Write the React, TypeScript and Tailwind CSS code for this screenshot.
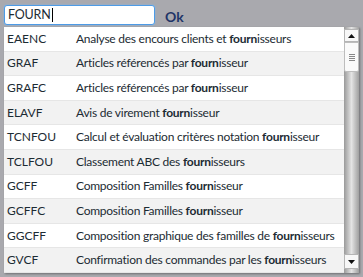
import React from "react";

const rows: [string, string, string, string][] = [
  ["EAENC", "Analyse des encours clients et ", "fourn", "isseurs"],
  ["GRAF", "Articles référencés par ", "fourn", "isseur"],
  ["GRAFC", "Articles référencés par ", "fourn", "isseur"],
  ["ELAVF", "Avis de virement ", "fourn", "isseur"],
  ["TCNFOU", "Calcul et évaluation critères notation ", "fourn", "isseur"],
  ["TCLFOU", "Classement ABC des ", "fourn", "isseurs"],
  ["GCFF", "Composition Familles ", "fourn", "isseur"],
  ["GCFFC", "Composition Familles ", "fourn", "isseur"],
  ["GGCFF", "Composition graphique des familles de ", "fourn", "isseurs"],
  ["GVCF", "Confirmation des commandes par les ", "fourn", "isseurs"],
];

export default function App() {
  return (
    <div
      className="h-[277px] w-[363px] overflow-hidden bg-[#a9a9ae] text-[#1c2b33]"
      style={{ fontFamily: "Lato, 'Open Sans', sans-serif" }}
    >
      <div className="flex h-[27px] items-start pl-[4px] pt-[5px]">
        <div className="flex h-[20px] w-[151px] items-center rounded-[3px] border border-[#4d9be6] bg-white pl-[3px] text-[12.5px] tracking-[-0.2px] shadow-[0_0_2px_#7db7f0]">
          FOURN<span className="ml-[1px] h-[14px] w-px bg-black" />
        </div>
        <span className="ml-[10px] mt-[1px] text-[14px] font-bold text-[#1f3568]">Ok</span>
      </div>
      <div className="ml-[4px] flex h-[246px] w-[355px] bg-white shadow-[1px_1px_2px_rgba(0,0,0,0.35)]">
        <div className="min-w-0 flex-1 overflow-hidden">
          {rows.map(([code, pre, bold, post], i) => (
            <div
              key={code}
              className={`flex h-[24.6px] items-center border-b border-[#e6e6e6] text-[12px] tracking-[-0.25px] ${
                i % 2 === 1 ? "bg-[#f2f2f2]" : "bg-white"
              }`}
            >
              <span className="w-[72px] shrink-0 pl-[3px] tracking-[0px]">{code}</span>
              <span className="whitespace-nowrap">
                {pre}
                <b className="font-bold">{bold}</b>
                {post}
              </span>
            </div>
          ))}
        </div>
        <div className="flex w-[15px] shrink-0 flex-col bg-gradient-to-r from-[#9a9a9a] via-[#e4e4e4] to-[#a0a0a0] pb-[4px] pt-[2px]">
          <div className="flex h-[13px] items-center justify-center border border-[#b5b5b5] bg-[#f7f7f7]">
            <svg width="7" height="4" viewBox="0 0 7 4">
              <path d="M0 4 L3.5 0 L7 4 Z" fill="#111" />
            </svg>
          </div>
          <div className="flex h-[30px] flex-col items-center justify-center gap-[1px] rounded-b-[2px] border border-[#bdbdbd] bg-[#fafafa]">
            <span className="h-px w-[6px] bg-[#888]" />
            <span className="h-px w-[6px] bg-[#888]" />
            <span className="h-px w-[6px] bg-[#888]" />
            <span className="h-px w-[6px] bg-[#888]" />
          </div>
          <div className="flex-1" />
          <div className="flex h-[15px] items-center justify-center border border-[#b5b5b5] bg-[#f7f7f7]">
            <svg width="7" height="4" viewBox="0 0 7 4">
              <path d="M0 0 L3.5 4 L7 0 Z" fill="#111" />
            </svg>
          </div>
        </div>
      </div>
    </div>
  );
}
